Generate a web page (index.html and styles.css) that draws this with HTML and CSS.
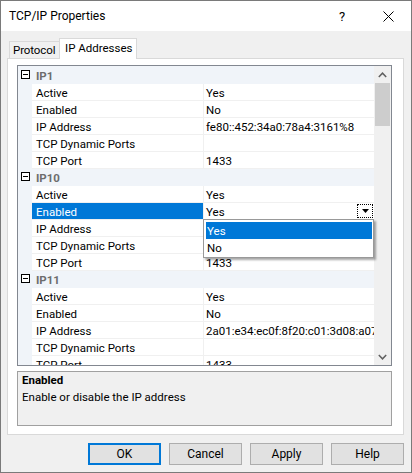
FILE: index.html
```html
<!DOCTYPE html>
<html>
<head>
<meta charset="utf-8">
<link rel="stylesheet" href="styles.css">
</head>
<body>
<div class="window">
  <div class="titlebar">
    <span class="title">TCP/IP Properties</span>
    <span class="caption-btn help">?</span>
    <span class="caption-btn close"><svg width="11" height="11" viewBox="0 0 11 11"><path d="M0.5 0.5 L10.5 10.5 M10.5 0.5 L0.5 10.5" stroke="#000" stroke-width="1" fill="none"/></svg></span>
  </div>
  <div class="body">
    <div class="tabs">
      <div class="tab">Protocol</div>
      <div class="tab active">IP Addresses</div>
    </div>
    <div class="panel">
      <div class="grid">
        <div class="rows">
          <div class="cat"><span class="gutter"><span class="toggle"></span></span><span class="cat-name">IP1</span></div>
          <div class="prop"><span class="gutter"></span><span class="name">Active</span><span class="value">Yes</span></div>
          <div class="prop"><span class="gutter"></span><span class="name">Enabled</span><span class="value">No</span></div>
          <div class="prop"><span class="gutter"></span><span class="name">IP Address</span><span class="value">fe80::452:34a0:78a4:3161%8</span></div>
          <div class="prop"><span class="gutter"></span><span class="name">TCP Dynamic Ports</span><span class="value"></span></div>
          <div class="prop"><span class="gutter"></span><span class="name">TCP Port</span><span class="value">1433</span></div>
          <div class="cat"><span class="gutter"><span class="toggle"></span></span><span class="cat-name">IP10</span></div>
          <div class="prop"><span class="gutter"></span><span class="name">Active</span><span class="value">Yes</span></div>
          <div class="prop"><span class="gutter"></span><span class="name selected">Enabled</span><span class="value edit"><span>Yes</span><span class="dd-btn"><svg width="7" height="4" viewBox="0 0 7 4"><path d="M0 0 H7 L3.5 4 Z" fill="#000"/></svg></span></span></div>
          <div class="prop"><span class="gutter"></span><span class="name">IP Address</span><span class="value"></span></div>
          <div class="prop"><span class="gutter"></span><span class="name">TCP Dynamic Ports</span><span class="value"></span></div>
          <div class="prop"><span class="gutter"></span><span class="name">TCP Port</span><span class="value">1433</span></div>
          <div class="cat"><span class="gutter"><span class="toggle"></span></span><span class="cat-name">IP11</span></div>
          <div class="prop"><span class="gutter"></span><span class="name">Active</span><span class="value">Yes</span></div>
          <div class="prop"><span class="gutter"></span><span class="name">Enabled</span><span class="value">No</span></div>
          <div class="prop"><span class="gutter"></span><span class="name">IP Address</span><span class="value">2a01:e34:ec0f:8f20:c01:3d08:a072</span></div>
          <div class="prop"><span class="gutter"></span><span class="name">TCP Dynamic Ports</span><span class="value"></span></div>
          <div class="prop"><span class="gutter"></span><span class="name">TCP Port</span><span class="value">1433</span></div>
        </div>
        <div class="scrollbar">
          <div class="sb-btn"><svg width="9" height="6" viewBox="0 0 9 6"><path d="M0.8 5 L4.5 1.2 L8.2 5" stroke="#606060" stroke-width="1.5" fill="none"/></svg></div>
          <div class="sb-track"><div class="sb-thumb"></div></div>
          <div class="sb-btn"><svg width="9" height="6" viewBox="0 0 9 6"><path d="M0.8 1 L4.5 4.8 L8.2 1" stroke="#606060" stroke-width="1.5" fill="none"/></svg></div>
        </div>
        <div class="dropdown">
          <div class="dd-item sel">Yes</div>
          <div class="dd-item">No</div>
        </div>
      </div>
      <div class="desc">
        <div class="desc-title">Enabled</div>
        <div class="desc-text">Enable or disable the IP address</div>
      </div>
    </div>
    <div class="buttons">
      <button class="btn default">OK</button>
      <button class="btn">Cancel</button>
      <button class="btn">Apply</button>
      <button class="btn">Help</button>
    </div>
  </div>
</div>
</body>
</html>
```
FILE: styles.css
```css
* { box-sizing: border-box; }
html, body { margin: 0; padding: 0; }
body {
  font-family: Roboto, "Noto Sans", sans-serif;
  font-size: 11.5px;
  color: #000;
  background: #fff;
}
.window {
  width: 412px;
  height: 473px;
  border: 1px solid #7a7a7a;
  display: flex;
  flex-direction: column;
  background: #f0f0f0;
}
.titlebar {
  height: 30px;
  flex: none;
  background: #fff;
  display: flex;
  align-items: center;
}
.title {
  flex: 1;
  padding-left: 8px;
  font-size: 12px;
}
.caption-btn {
  width: 46px;
  height: 30px;
  display: flex;
  align-items: center;
  justify-content: center;
}
.help { font-size: 13px; }
.body {
  flex: 1;
  padding: 7px 7px 7px 6px;
  display: flex;
  flex-direction: column;
}
.tabs {
  height: 20px;
  display: flex;
  align-items: flex-end;
  padding-left: 2px;
  position: relative;
  z-index: 1;
}
.tab {
  width: 50px;
  height: 17px;
  border: 1px solid #d9d9d9;
  border-right: none;
  border-bottom: none;
  line-height: 17px;
  padding-left: 3px;
  background: #f0f0f0;
  white-space: nowrap;
  letter-spacing: -0.1px;
}
.tab.active {
  width: 78px;
  height: 21px;
  margin-bottom: -1px;
  border-right: 1px solid #d9d9d9;
  line-height: 18px;
  padding-left: 5px;
  background: #fff;
  letter-spacing: 0;
}
.panel {
  height: 377px;
  border: 1px solid #d9d9d9;
  background: #fff;
  padding: 6px 11px 8px 9px;
  display: flex;
  flex-direction: column;
}
.grid {
  height: 301px;
  border: 1px solid #828790;
  display: flex;
  position: relative;
  background: #fff;
}
.rows {
  flex: 1;
  overflow: hidden;
  padding-top: 1px;
  background: #f0f4f9;
}
.cat, .prop {
  height: 17px;
  display: flex;
}
.gutter {
  width: 14px;
  flex: none;
  background: #f0f4f9;
}
.toggle {
  display: block;
  width: 9px;
  height: 9px;
  margin: 3px 0 0 3px;
  border: 1px solid #000;
  position: relative;
  background: #fff;
}
.toggle::after {
  content: "";
  position: absolute;
  left: 1px;
  right: 1px;
  top: 3px;
  height: 1px;
  background: #000;
}
.cat-name {
  padding-left: 4px;
  line-height: 18px;
  font-weight: bold;
  color: #6d6d6d;
}
.name {
  width: 171px;
  flex: none;
  padding-left: 4px;
  line-height: 18px;
  background: #fff;
  border-bottom: 1px solid #f0f0f0;
  white-space: nowrap;
}
.name.selected {
  background: #0078d7;
  color: #fff;
}
.value {
  flex: 1;
  min-width: 0;
  padding-left: 2px;
  line-height: 18px;
  background: #fff;
  border-left: 1px solid #f0f0f0;
  border-bottom: 1px solid #f0f0f0;
  white-space: nowrap;
  overflow: hidden;
}
.value.edit {
  display: flex;
  justify-content: space-between;
  align-items: center;
  padding-right: 1px;
}
.value.edit > span:first-child { line-height: 18px; margin-top: 1px; }
.dd-btn {
  width: 16px;
  height: 14px;
  border: 1px dotted #000;
  display: flex;
  align-items: center;
  justify-content: center;
}
.scrollbar {
  width: 17px;
  flex: none;
  background: #f0f0f0;
  display: flex;
  flex-direction: column;
}
.sb-btn {
  height: 17px;
  display: flex;
  align-items: center;
  justify-content: center;
}
.sb-track { flex: 1; }
.sb-thumb {
  height: 43px;
  margin: 0 1px;
  background: #cdcdcd;
}
.dropdown {
  position: absolute;
  left: 185px;
  top: 153px;
  width: 171px;
  height: 39px;
  border: 1px solid #999;
  background: #fff;
  padding: 2px 1px 2px 2px;
  box-shadow: 2px 2px 2px rgba(0, 0, 0, 0.35);
  z-index: 2;
}
.dd-item {
  height: 17px;
  line-height: 18px;
  padding-left: 1px;
}
.dd-item.sel {
  background: #0078d7;
  color: #fff;
}
.desc {
  height: 55px;
  margin-top: 5px;
  border: 1px solid #a0a0a0;
  background: #f0f0f0;
  padding: 0 4px;
  line-height: 17px;
}
.desc-title { font-weight: bold; }
.buttons {
  margin-top: 8px;
  display: flex;
  justify-content: flex-end;
  gap: 8px;
}
.btn {
  width: 73px;
  height: 22px;
  border: 1px solid #adadad;
  background: #e1e1e1;
  font-family: inherit;
  font-size: 12px;
  color: #000;
  padding: 0;
  margin: 0;
}
.btn.default {
  border: 2px solid #0078d7;
}
```
